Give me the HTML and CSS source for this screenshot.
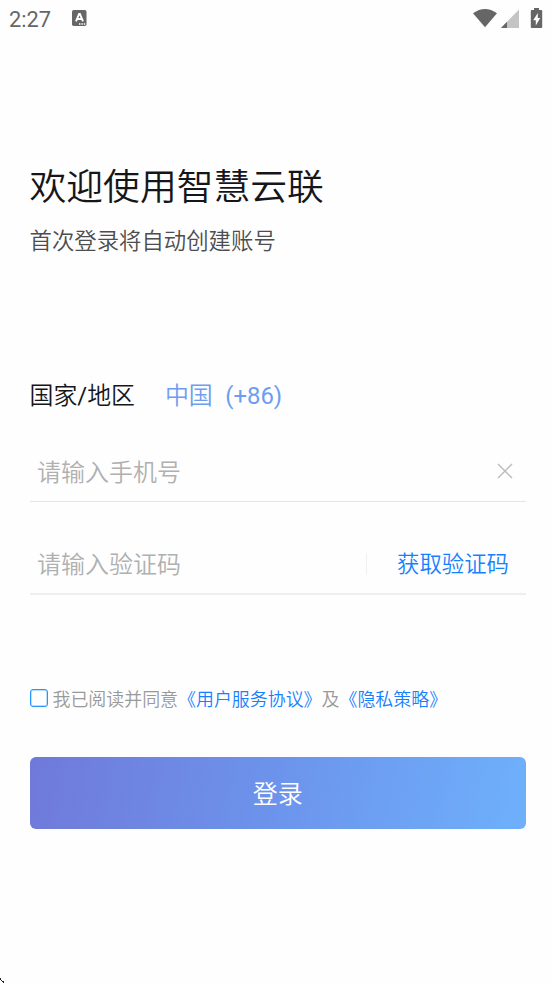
FILE: index.html
```html
<!DOCTYPE html>
<html lang="zh-CN">
<head>
<meta charset="utf-8">
<title>登录</title>
<link rel="stylesheet" href="styles.css">
</head>
<body>
<header class="status">
  <span class="time">2:27</span>
  <svg class="app-icon" width="15" height="17" viewBox="0 0 15 17"><rect width="14.5" height="16" rx="1.8" fill="#666"/><path d="M4 11.3 7.1 4h.8L11 11.3M5.2 9h4.6" fill="none" stroke="#fff" stroke-width="1.9"/><path d="M7 14h1.4M9.4 14h1.4M11.8 14h1.4" stroke="#fff" stroke-width="1.3"/></svg>
  <svg class="signals" width="70" height="22" viewBox="0 0 70 22"><path d="M0 5.3Q12-3.300 24 5.300L12 19.300Z" fill="#666"/><path d="M46 1.500V20H28Z" fill="#c4c4c4"/><path d="M34 13.800V20H28Z" fill="#666"/><path d="M61 0h5v2h2.200q1 0 1 1v16q0 1-1 1h-9.400q-1 0-1-1V3q0-1 1-1H61Z" fill="#666"/><path d="M64.800 5v5h2.400l-4.400 7.500v-5.300h-2.600Z" fill="#fff"/></svg>
</header>
<main class="page">
  <h1 class="title">欢迎使用智慧云联</h1>
  <p class="subtitle">首次登录将自动创建账号</p>
  <form class="form">
    <div class="region"><span>国家<span class="latin">/</span>地区</span><span class="country">中国</span><span class="code">(+86)</span></div>
    <div class="field phone"><span class="hint">请输入手机号</span>
      <svg width="16" height="16" viewBox="0 0 16 16"><path d="M1 1 15 15M15 1 1 15" stroke="#bbb" stroke-width="1.4"/></svg>
    </div>
    <div class="field verify"><span class="hint">请输入验证码</span><span class="get-code">获取验证码</span></div>
    <div class="agree"><span class="box"></span><span>我已阅读并同意<a>《用户服务协议》</a>及<a>《隐私策略》</a></span></div>
    <div class="submit">登录</div>
  </form>
</main>
<svg class="corner" width="5" height="5" viewBox="0 0 5 5" shape-rendering="crispEdges"><path d="M0 0h1v2H0zM1 2h1v1H1zM2 3h2v2H3V4H2z" fill="#222"/></svg>
</body>
</html>
```
FILE: styles.css
```css
* { box-sizing: border-box; }
body {
  position: relative;
  margin: 0;
  height: 983px;
  overflow: hidden;
  background: #fefefe;
  color: #15161a;
  font-family: Roboto, "Noto Sans CJK SC", sans-serif;
  font-weight: 350;
}
svg { display: block; }
.status { display: flex; height: 40px; padding: 8px 10px 0 9px; }
.time { width: 63px; font-size: 21.800px; line-height: 24px; color: #666; font-weight: 450; }
.app-icon { margin-top: 2px; }
.signals { margin-left: auto; margin-right: -1px; }
.page { padding: 124px 26px 0 29.500px; }
.title { margin: 0; font-size: 36.800px; line-height: 48px; font-weight: 350; white-space: nowrap; }
.subtitle { margin: 13px 0 0; font-size: 22.400px; line-height: 32px; color: #4d4d4f; }
.form { margin-top: 123px; }
.region { display: flex; height: 32px; font-size: 23.900px; line-height: 32px; }
.latin, .code { font-weight: 400; }
.country { margin-left: 30px; color: #6d9df0; }
.code { margin-left: 12.500px; color: #6d9df0; }
.field { display: flex; align-items: center; padding-left: 7.500px; border-bottom: 1px solid #e4e4e4; font-size: 24px; line-height: 32px; }
.hint { flex: 1; padding-top: 5px; color: #b0b0b0; }
.phone { height: 62px; margin-top: 28px; padding-right: 13px; }
.verify { height: 63px; margin-top: 30px; padding-right: 17px; border-bottom: 2px solid #eee; }
.get-code { border-left: 1px solid #f0f0f0; padding-left: 30px; margin-top: 2px; line-height: 22px; font-size: 22.400px; color: #1780ff; }
.agree { display: flex; align-items: center; height: 28px; margin-top: 89px; gap: 5px; font-family: "Noto Sans CJK SC", sans-serif; font-size: 17.950px; line-height: 26px; color: #999; white-space: nowrap; }
.box { width: 18px; height: 18px; border: 1.500px solid #2494ff; border-radius: 3px; box-shadow: inset 0 0 0 .5px #7dc0ff; }
.agree a { color: #1780ff; }
.submit { height: 72px; margin-top: 45px; padding-top: 2px; border-radius: 6px; background: linear-gradient(100deg, #7079d9, #6c94ec 50%, #6eb0fb); color: #fff; font-size: 25px; line-height: 72px; text-align: center; }
.corner { position: absolute; left: 0; bottom: 0; }
```
